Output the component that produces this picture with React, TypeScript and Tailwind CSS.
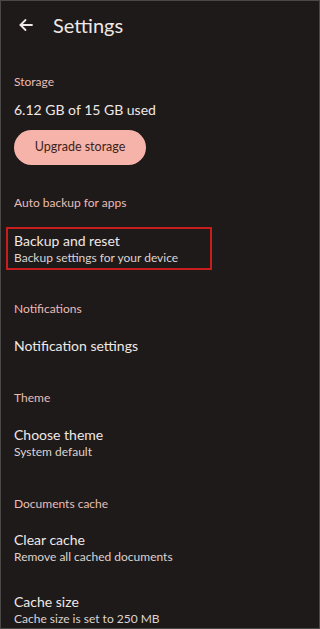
import React from 'react';

const font = { fontFamily: 'Lato, "Open Sans", sans-serif' };

const Label: React.FC<{ text: string; className?: string }> = ({ text, className = '' }) => (
  <div className={`px-[13px] text-[12px] leading-[16px] text-[#e9bdb7] ${className}`}>{text}</div>
);

const Item: React.FC<{ title: string; subtitle?: string; className?: string }> = ({ title, subtitle, className = '' }) => (
  <div className={`px-[13px] ${className}`}>
    <div className="text-[14px] leading-[18px] text-[#eee8e6]">{title}</div>
    {subtitle && <div className="text-[12px] leading-[16px] text-[#ddd4d1]">{subtitle}</div>}
  </div>
);

export default function App() {
  return (
    <div
      className="w-[320px] h-[629px] overflow-hidden bg-[#1e1a19] border border-[#4a4747] flex flex-col"
      style={font}
    >
      <div className="mt-[12px] h-[24px] flex items-center">
        <svg className="ml-[17px]" width="16" height="16" viewBox="0 0 16 16" fill="none" stroke="#eee8e6" strokeWidth="1.8" strokeLinecap="round" strokeLinejoin="round">
          <path d="M14 8H2.5" />
          <path d="M7.5 3L2.5 8l5 5" />
        </svg>
        <span className="ml-[19px] text-[20px] leading-[24px] text-[#eee8e6]">Settings</span>
      </div>

      <Label text="Storage" className="mt-[37px]" />
      <Item title="6.12 GB of 15 GB used" className="mt-[11px]" />
      <div className="px-[13px] mt-[11px]">
        <button className="w-[132px] h-[35px] rounded-full bg-[#f5b3a9] text-[#3f1f1b] text-[12.5px]">
          Upgrade storage
        </button>
      </div>

      <Label text="Auto backup for apps" className="mt-[30px]" />
      <div className="mt-[16px] ml-[5px] w-[206px] border-2 border-[#c81d1d] pl-[6px] pt-[3px] pb-[2px]">
        <div className="text-[14px] leading-[18px] text-[#eee8e6]">Backup and reset</div>
        <div className="text-[12px] leading-[16px] text-[#ddd4d1]">Backup settings for your device</div>
      </div>

      <Label text="Notifications" className="mt-[31px]" />
      <Item title="Notification settings" className="mt-[20px]" />

      <Label text="Theme" className="mt-[35px]" />
      <Item title="Choose theme" subtitle="System default" className="mt-[20px]" />

      <Label text="Documents cache" className="mt-[36px]" />
      <Item title="Clear cache" subtitle="Remove all cached documents" className="mt-[19px]" />
      <Item title="Cache size" subtitle="Cache size is set to 250 MB" className="mt-[28px]" />
    </div>
  );
}
